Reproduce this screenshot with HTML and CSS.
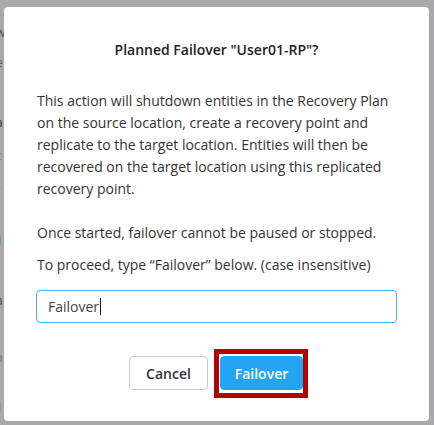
FILE: index.html
```html
<!DOCTYPE html>
<html lang="en">
<head>
<meta charset="utf-8">
<link rel="stylesheet" href="styles.css">
</head>
<body>
<div class="backdrop">
  <div class="underlay">
    <span class="u u1">w</span><span class="u u2">e</span><span class="u u3">a</span><span class="u u4">c</span><span class="u u5">c</span><span class="u u6">1</span><span class="u u7">a</span><span class="u u8">a</span><span class="u u9">1</span>
  </div>
  <div class="modal">
    <h1 class="title">Planned Failover "User01-RP"?</h1>
    <p class="msg msg-main">This action will shutdown entities in the Recovery Plan on the source location, create a recovery point and replicate to the target location. Entities will then be recovered on the target location using this replicated recovery point.</p>
    <p class="msg msg-warn">Once started, failover cannot be paused or stopped.</p>
    <p class="msg msg-hint">To proceed, type “Failover” below. (case insensitive)</p>
    <div class="field"><span class="field-text">Failover</span><span class="caret"></span></div>
    <div class="actions">
      <button class="btn btn-cancel">Cancel</button>
      <button class="btn btn-primary">Failover</button>
    </div>
  </div>
</div>
</body>
</html>
```
FILE: styles.css
```css
html, body {
  margin: 0;
  padding: 0;
  background: #a9a9ab;
  width: 434px;
  height: 425px;
  overflow: hidden;
}
.backdrop {
  display: flex;
  align-items: flex-start;
  height: 425px;
  font-family: "Open Sans", "Liberation Sans", sans-serif;
}
.underlay {
  width: 4px;
  display: flex;
  flex-direction: column;
  align-items: flex-start;
  overflow: hidden;
}
.u {
  display: block;
  font-size: 12px;
  line-height: 9px;
  height: 9px;
  margin-left: -4px;
  color: #3a3a3a;
  opacity: 0.8;
}
.u1 { margin-top: 28px; }
.u2 { margin-top: 21px; color: #555; }
.u3 { margin-top: 51px; color: #111; }
.u4 { margin-top: 24px; color: #6f8298; }
.u5 { margin-top: 23px; color: #b5b5b5; }
.u6 { margin-top: 44px; color: #2f8be0; }
.u7 { margin-top: 51px; color: #333; }
.u8 { margin-top: 48px; color: #666; }
.u9 { margin-top: 40px; color: #8a6a30; }
.modal {
  margin-top: 7px;
  width: 425px;
  height: 414px;
  box-sizing: border-box;
  background: #fff;
  border-radius: 4px;
  padding: 33px 32px 0 32px;
  color: #333;
}
.title {
  margin: 0;
  font-size: 14px;
  font-weight: 600;
  line-height: 20px;
  text-align: center;
  color: #222;
}
.msg {
  margin: 0;
  font-size: 14px;
  line-height: 22px;
  color: #333;
  padding-left: 1px;
}
.msg-main { margin-top: 30px; }
.msg-warn { margin-top: 22px; }
.msg-hint { margin-top: 10px; }
.field {
  margin-top: 14px;
  height: 33px;
  box-sizing: border-box;
  border: 1.5px solid #4cb1f7;
  border-radius: 4px;
  display: flex;
  align-items: center;
  padding-left: 11px;
  font-size: 14px;
  color: #444;
}
.caret {
  width: 1px;
  height: 17px;
  background: #111;
  margin-left: 1px;
}
.actions {
  margin-top: 33px;
  display: flex;
  justify-content: center;
  gap: 12px;
  padding-right: 1px;
}
.btn {
  height: 34px;
  border-radius: 4px;
  font-family: "Open Sans", "Liberation Sans", sans-serif;
  font-size: 14px;
  font-weight: 600;
  box-sizing: border-box;
  margin: 0;
  cursor: pointer;
}
.btn-cancel {
  background: #fff;
  border: 1px solid #c9ced6;
  color: #333;
  padding: 0 16px;
  width: 79px;
}
.btn-primary {
  position: relative;
  background: #23a5f3;
  border: 1px solid #23a5f3;
  color: #fff;
  width: 83px;
  padding: 0;
}
.btn-primary::after {
  content: "";
  position: absolute;
  left: -7px;
  right: -6px;
  top: -8px;
  bottom: -9px;
  border: 5px solid #b30000;
}
```
